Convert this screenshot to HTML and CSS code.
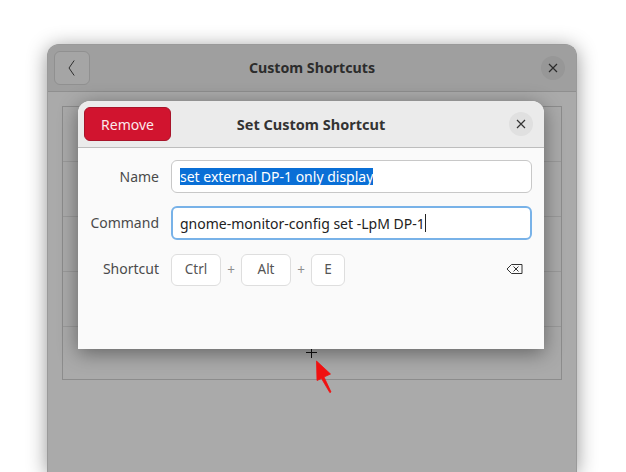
FILE: index.html
```html
<!DOCTYPE html>
<html lang="en">
<head>
<meta charset="utf-8">
<title>Set Custom Shortcut</title>
<link rel="stylesheet" href="styles.css">
</head>
<body>
<div class="window">
  <header class="win-header">
    <div class="side">
      <button class="back-btn" aria-label="Back">
        <svg width="16" height="18" viewBox="0 0 16 18"><path d="M10.2 1.5 L5 9 L10.2 16.5" fill="none" stroke="#2e2e2e" stroke-width="1"/></svg>
      </button>
    </div>
    <h1 class="win-title">Custom Shortcuts</h1>
    <div class="side end">
      <button class="close-btn dim" aria-label="Close">
        <svg width="10" height="10" viewBox="0 0 10 10"><path d="M1 1 L9 9 M9 1 L1 9" stroke="#2c2c2c" stroke-width="1.2"/></svg>
      </button>
    </div>
  </header>
  <div class="win-body">
    <div class="list">
      <div class="row"></div>
      <div class="row"></div>
      <div class="row"></div>
      <div class="row"></div>
      <div class="row add-row">
        <svg class="plus" width="11" height="11" viewBox="0 0 11 11"><path d="M0 5.5 H11 M5.5 0 V11" stroke="#111" stroke-width="1"/></svg>
      </div>
    </div>
  </div>
</div>

<section class="dialog">
  <header class="dlg-header">
    <div class="side">
      <button class="remove-btn">Remove</button>
    </div>
    <h2 class="dlg-title">Set Custom Shortcut</h2>
    <div class="side end">
      <button class="close-btn" aria-label="Close">
        <svg width="10" height="10" viewBox="0 0 10 10"><path d="M1 1 L9 9 M9 1 L1 9" stroke="#333" stroke-width="1.2"/></svg>
      </button>
    </div>
  </header>
  <div class="dlg-body">
    <label class="lbl">Name</label>
    <div class="entry"><span class="selected">set external DP-1 only display</span></div>
    <label class="lbl">Command</label>
    <div class="entry focused"><span>gnome-monitor-config set -LpM DP-1</span><i class="caret"></i></div>
    <label class="lbl">Shortcut</label>
    <div class="keys">
      <span class="key wide">Ctrl</span>
      <span class="sep">+</span>
      <span class="key wide">Alt</span>
      <span class="sep">+</span>
      <span class="key">E</span>
      <svg class="bksp" width="17" height="12" viewBox="0 0 17 12"><path d="M5.5 1.5 H16 V10.5 H5.5 L1 6 Z" fill="none" stroke="#333" stroke-width="1"/><path d="M7.5 3.5 L12.5 8.5 M12.5 3.5 L7.5 8.5" stroke="#333" stroke-width="1"/></svg>
    </div>
  </div>
</section>

<svg class="arrow" width="30" height="40" viewBox="0 0 30 40">
  <path d="M6.5 1 L20.5 14 L14 17 L21 32 L19.8 32.6 L11.5 18.5 L7 20.5 Z" fill="#f01010" stroke="#f01010" stroke-width=".8"/>
</svg>
</body>
</html>
```
FILE: styles.css
```css
* { box-sizing: border-box; }
html, body { margin: 0; height: 100%; }
body {
  position: relative;
  width: 626px;
  height: 472px;
  overflow: hidden;
  background: #fff;
  font-family: "Noto Sans", "Open Sans", sans-serif;
  font-size: 14px;
  color: #333;
}
button { font: inherit; padding: 0; border: 0; }

.window {
  position: absolute;
  left: 47px;
  top: 44px;
  width: 530px;
  height: 428px;
  border-radius: 12px 12px 0 0;
  background: #aaaaaa;
  border: 1px solid #9a9a9a;
  border-bottom: 0;
  box-shadow: 0 3px 20px rgba(0, 0, 0, .42);
  display: flex;
  flex-direction: column;
}
.win-header {
  height: 47px;
  flex: none;
  display: grid;
  grid-template-columns: 1fr auto 1fr;
  align-items: center;
  padding: 0 6px;
  background: #9f9f9f;
  border-bottom: 1px solid #8f8f8f;
  border-radius: 11px 11px 0 0;
}
.side { display: flex; }
.side.end { justify-content: flex-end; }
.back-btn {
  width: 36px;
  height: 34px;
  display: flex;
  align-items: center;
  justify-content: center;
  background: #a5a5a5;
  border: 1px solid #909090;
  border-radius: 6px;
}
.win-title {
  margin: 0;
  padding-bottom: 2px;
  font-size: 14.2px;
  font-weight: 700;
  color: #2c2c2c;
}
.close-btn {
  width: 24px;
  height: 24px;
  flex: none;
  margin-right: 5px;
  border-radius: 50%;
  display: flex;
  align-items: center;
  justify-content: center;
  background: #e0e0e0;
}
.close-btn.dim { background: #979797; }
.win-body {
  flex: 1;
  padding: 14px 14px 0;
}
.list {
  height: 274px;
  border: 1px solid #8c8c8c;
  display: flex;
  flex-direction: column;
}
.row {
  height: 55px;
  border-bottom: 1px solid #9a9a9a;
  flex: none;
}
.add-row {
  flex: 1;
  border-bottom: 0;
  position: relative;
}
.plus {
  position: absolute;
  left: 243px;
  top: 20px;
}

.dialog {
  position: absolute;
  left: 78px;
  top: 101px;
  width: 466px;
  height: 248px;
  border-radius: 12px 12px 0 0;
  background: #fafafa;
  box-shadow: 0 4px 20px rgba(0, 0, 0, .42);
  display: flex;
  flex-direction: column;
}
.dlg-header {
  height: 47px;
  flex: none;
  display: grid;
  grid-template-columns: 1fr auto 1fr;
  align-items: center;
  padding: 0 6px;
  background: #ebebeb;
  border-bottom: 1px solid #bdbdbd;
  border-radius: 12px 12px 0 0;
}
.remove-btn {
  width: 87px;
  height: 34px;
  border-radius: 6px;
  background: #d1142f;
  border: 1px solid #a8142a;
  color: #fbe9ec;
}
.dlg-title {
  margin: 0;
  padding-bottom: 1px;
  font-size: 14.5px;
  font-weight: 700;
  color: #333;
}
.dlg-body {
  display: grid;
  grid-template-columns: 81px 361px;
  column-gap: 12px;
  row-gap: 13px;
  padding: 12px 0 0;
  align-items: center;
}
.lbl {
  text-align: right;
  color: #4a4a4a;
  padding-bottom: 2px;
}
.lbl:first-child { padding-bottom: 0; }
.entry {
  height: 33px;
  display: flex;
  align-items: center;
  padding: 0 8px;
  background: #fff;
  border: 1px solid #c8c8c8;
  border-radius: 6px;
  color: #2c2c2c;
  white-space: nowrap;
}
.entry.focused {
  height: 34px;
  border: 2px solid #78b2e8;
  padding: 0 7px;
  color: #222;
}
.selected {
  background: #0a6fd6;
  color: #fff;
  line-height: 17px;
}
.caret {
  width: 1px;
  height: 18px;
  background: #222;
}
.keys {
  display: flex;
  align-items: center;
  height: 33px;
}
.key {
  width: 34px;
  height: 32px;
  margin-top: 1px;
  padding-bottom: 2px;
  display: flex;
  align-items: center;
  justify-content: center;
  background: #fff;
  border: 1px solid #dedede;
  border-radius: 6px;
  font-size: 13.5px;
  color: #555;
}
.key.wide { width: 50px; }
.sep {
  width: 20px;
  text-align: center;
  font-size: 13.5px;
  color: #8e8e8e;
}
.bksp {
  margin-left: auto;
  margin-right: 9px;
  margin-bottom: 1px;
}
.arrow {
  position: absolute;
  left: 310px;
  top: 360px;
}
```
